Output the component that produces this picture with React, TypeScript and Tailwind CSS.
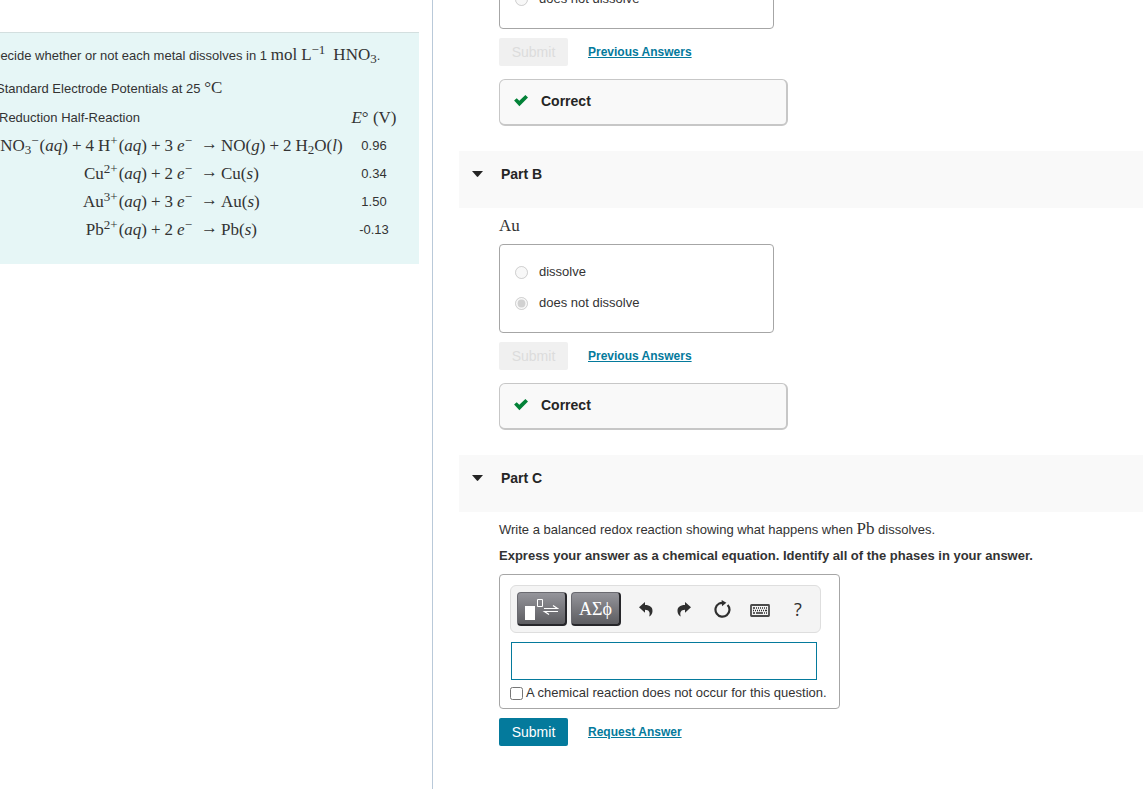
import type { ReactNode } from "react";

const SERIF = "font-['Liberation_Serif',serif] text-[17px]";

function Chem({ children }: { children: ReactNode }) {
  return <span className={`${SERIF} whitespace-nowrap leading-5`}>{children}</span>;
}

function Sup({ children }: { children: ReactNode }) {
  return <sup className="text-[13px]">{children}</sup>;
}

function Sub({ children }: { children: ReactNode }) {
  return <sub className="text-[13px]">{children}</sub>;
}

function Plus() {
  return <span className="mx-1">+</span>;
}

function Electrons({ count }: { count: number }) {
  return (
    <>
      {count}
      <i className="ml-1">e</i>
      <Sup>−</Sup>
    </>
  );
}

function Ion({ symbol, charge }: { symbol: string; charge: string }) {
  return (
    <>
      {symbol}
      <Sup>{charge}</Sup>
      <span className="ml-px">(</span>
      <i>aq</i>)
    </>
  );
}

type Reaction = { id: string; left: ReactNode; right: ReactNode; potential: string };

const metal = (symbol: string, charge: string, count: number, potential: string): Reaction => ({
  id: symbol,
  left: (
    <>
      <Ion symbol={symbol} charge={charge} />
      <Plus />
      <Electrons count={count} />
    </>
  ),
  right: (
    <>
      {symbol}(<i>s</i>)
    </>
  ),
  potential,
});

const reactions: Reaction[] = [
  {
    id: "NO3",
    left: (
      <>
        NO<Sub>3</Sub>
        <Sup>−</Sup>
        <span className="ml-px">(</span>
        <i>aq</i>)<Plus />4<span className="ml-1">H</span>
        <Sup>+</Sup>
        <span className="ml-px">(</span>
        <i>aq</i>)<Plus />
        <Electrons count={3} />
      </>
    ),
    right: (
      <>
        NO(<i>g</i>)<Plus />2<span className="ml-1">H</span>
        <Sub>2</Sub>O(<i>l</i>)
      </>
    ),
    potential: "0.96",
  },
  metal("Cu", "2+", 2, "0.34"),
  metal("Au", "3+", 3, "1.50"),
  metal("Pb", "2+", 2, "-0.13"),
];

function Introduction() {
  return (
    <aside className="w-[433px] shrink-0 overflow-hidden border-r border-[#b9c9d9] pt-8">
      <div className="mr-[13px] h-[232px] border-t border-[#d3dfdf] bg-[#e6f6f6] pt-3">
        <p className="-ml-[9px] whitespace-nowrap leading-5">
          Decide whether or not each metal dissolves in 1{" "}
          <Chem>
            mol<span className="ml-1">L</span>
            <Sup>−1</Sup>
            <span className="ml-2">HNO</span>
            <Sub>3</Sub>
          </Chem>
          .
        </p>
        <p className="-ml-1 mt-3 whitespace-nowrap leading-5">
          Standard Electrode Potentials at 25 <Chem>°C</Chem>
        </p>
        <table className="-ml-1 mt-[5px] w-[402px] table-fixed border-collapse">
          <colgroup>
            <col className="w-[196px]" />
            <col className="w-[29px]" />
            <col className="w-[129px]" />
            <col className="w-12" />
          </colgroup>
          <thead>
            <tr className="h-7">
              <th colSpan={3} className="p-0 pl-[3px] text-left font-normal">
                Reduction Half-Reaction
              </th>
              <th className="p-0 text-center font-normal">
                <Chem>
                  <i>E</i>° (V)
                </Chem>
              </th>
            </tr>
          </thead>
          <tbody>
            {reactions.map((r) => (
              <tr key={r.id} className="h-7">
                <td className="p-0">
                  <div className="flex justify-end">
                    <Chem>{r.left}</Chem>
                  </div>
                </td>
                <td className="p-0 pb-1 pr-[3px] text-right">
                  <Chem>→</Chem>
                </td>
                <td className="p-0">
                  <Chem>{r.right}</Chem>
                </td>
                <td className="p-0 text-center">{r.potential}</td>
              </tr>
            ))}
          </tbody>
        </table>
      </div>
    </aside>
  );
}

function Choices({ name, selected }: { name: string; selected: string }) {
  return (
    <fieldset
      disabled
      className="flex h-[89px] w-[275px] flex-col gap-[11px] rounded-[4px] border border-[#a6a6a6] pl-[15px] pt-[17px]"
    >
      {["dissolve", "does not dissolve"].map((option) => (
        <label key={option} className="flex h-5 items-center gap-[11px]">
          <input type="radio" name={name} defaultChecked={option === selected} className="m-0 size-[13px]" />
          {option}
        </label>
      ))}
    </fieldset>
  );
}

function Actions({ link, disabled = false }: { link: string; disabled?: boolean }) {
  return (
    <div className="mt-[9px] flex h-7 items-center gap-5">
      <button
        type="button"
        disabled={disabled}
        className="h-7 w-[69px] rounded-[2px] bg-[#047a9c] text-sm text-white disabled:bg-[#f0f0f0] disabled:text-[#dcdcdc]"
      >
        Submit
      </button>
      <a href="#answers" className="text-xs font-bold text-[#047a9c] underline underline-offset-1">
        {link}
      </a>
    </div>
  );
}

function CorrectBanner() {
  return (
    <div className="mt-[13px] flex h-[47px] w-[289px] items-start rounded-md border border-b-2 border-r-2 border-[#c7c7c7] bg-[#f9f9f9] pl-3.5 pt-[11px]">
      <svg viewBox="0 0 14 12" className="mt-1 h-3 w-3.5" aria-hidden="true">
        <path d="M0.1 5.6 2.7 3.3 5.3 5.7 11.4 0 14 2.4 5.4 11.2Z" fill="#038238" />
      </svg>
      <strong className="ml-[13px] text-sm leading-5 text-[#252525]">Correct</strong>
    </div>
  );
}

function PartHeader({ title }: { title: string }) {
  return (
    <header className="mt-[25px] flex h-[57px] items-start bg-[#f9f9f9] pl-[13px] pt-[13px]">
      <button type="button" className="flex items-center gap-[18px] text-sm font-bold leading-5 text-[#252525]">
        <svg viewBox="0 0 11 6" className="h-1.5 w-[11px]" aria-hidden="true">
          <path d="M0 0H11L6.2 5.6Q5.5 6.2 4.8 5.6Z" fill="#252525" />
        </svg>
        {title}
      </button>
    </header>
  );
}

const TOOL = "flex h-[34px] w-[38px] items-center justify-center";
const PALETTE =
  "flex h-[34px] w-[50px] items-center justify-center rounded-[4px] border border-b-2 border-r-2 border-[#26262a] border-l-[#6a6a70] border-t-[#6a6a70] bg-linear-to-b from-[#95959b] to-[#5d5d61] text-white";

function Toolbar() {
  return (
    <div className="flex h-12 w-[311px] items-center rounded-md border border-[#dedede] bg-[#f4f4f4] pl-1.5">
      <button type="button" aria-label="Templates" className={PALETTE}>
        <svg viewBox="0 0 34 22" className="h-[22px] w-[34px]" aria-hidden="true">
          <path d="M0 8H10V22H0Z" fill="#fff" />
          <path d="M12.5 1.5H17.5V8.5H12.5Z" fill="none" stroke="#fff" />
          <path d="M19 10.5H32.5L28 7.5M33 13.5H19.5L24 16.5" fill="none" stroke="#fff" strokeWidth="1.2" />
        </svg>
      </button>
      <button
        type="button"
        aria-label="Symbols"
        className={`${PALETTE} ml-1 mr-1.5 font-['Liberation_Serif',serif] text-lg`}
      >
        ΑΣϕ
      </button>
      <button type="button" aria-label="Undo" className={TOOL}>
        <svg viewBox="0 0 14 15" className="h-[15px] w-3.5" aria-hidden="true">
          <path d="M0 5.2 6 0V3.1C11 3.1 13.7 5.5 13.5 9.2 13.4 11.7 12 13.6 10.2 14.6 11.5 10.5 10.1 7.9 6 7.8V10.7Z" fill="#2f2f2f" />
        </svg>
      </button>
      <button type="button" aria-label="Redo" className={TOOL}>
        <svg viewBox="0 0 14 15" className="h-[15px] w-3.5" aria-hidden="true">
          <path d="M14 5.2 8 0V3.1C3 3.1 0.3 5.5 0.5 9.2 0.6 11.7 2 13.6 3.8 14.6 2.5 10.5 3.9 7.9 8 7.8V10.7Z" fill="#2f2f2f" />
        </svg>
      </button>
      <button type="button" aria-label="Reset" className={TOOL}>
        <svg viewBox="0 0 17 18" className="h-[18px] w-[17px]" aria-hidden="true">
          <path d="M13.6 4.9A7 7 0 1 1 5 3.6Q6.4 2.8 8.5 2.8" fill="none" stroke="#2f2f2f" strokeWidth="2.2" />
          <path d="M7.6 0 12.4 2.8 8 6.2Z" fill="#2f2f2f" />
        </svg>
      </button>
      <button type="button" aria-label="Keyboard shortcuts" className={`${TOOL} pt-[3px]`}>
        <svg viewBox="0 0 20 13" className="h-[13px] w-5" aria-hidden="true">
          <path d="M1.5 1H18.5Q19 1 19 1.5V11.5Q19 12 18.5 12H1.5Q1 12 1 11.5V1.5Q1 1 1.5 1Z" fill="none" stroke="#4a4a4a" strokeWidth="1.8" />
          <path
            d="M3 4H5M6 4H7M8 4H9M10 4H11M12 4H13M14 4H15M16 4H17M3 6.5H4M5 6.5H6M7 6.5H8M9 6.5H10M11 6.5H12M13 6.5H14M15 6.5H17M3 9H5M6 9H13M14 9H15M16 9H17"
            fill="none"
            stroke="#2f2f2f"
            strokeWidth="1.4"
          />
        </svg>
      </button>
      <button
        type="button"
        aria-label="Help"
        className={`${TOOL} font-['Open_Sans',sans-serif] text-lg font-medium text-[#2f2f2f]`}
      >
        ?
      </button>
    </div>
  );
}

function AnswerEditor() {
  return (
    <div className="h-[135px] w-[341px] rounded-[4px] border border-[#a6a6a6] pl-2.5 pt-2.5">
      <Toolbar />
      <input
        type="text"
        aria-label="Chemical equation"
        className="ml-px mt-[9px] block h-[38px] w-[306px] border border-[#047a9c] bg-white px-2 outline-none"
      />
      <label className="mt-[3px] flex h-5 items-center gap-[3px] whitespace-nowrap">
        <input type="checkbox" className="m-0 size-[13px]" />
        A chemical reaction does not occur for this question.
      </label>
    </div>
  );
}

export default function App() {
  return (
    <div className="flex h-screen overflow-hidden bg-white font-['Liberation_Sans',Arial,sans-serif] text-[13px] text-[#333]">
      <Introduction />
      <main className="min-w-0 flex-1 overflow-hidden pl-[26px]">
        <section className="-mt-[60px] pl-10">
          <Choices name="part-a" selected="dissolve" />
          <Actions link="Previous Answers" disabled />
          <CorrectBanner />
        </section>
        <section>
          <PartHeader title="Part B" />
          <div className="pl-10">
            <p className="flex h-9 items-center">
              <Chem>Au</Chem>
            </p>
            <Choices name="part-b" selected="does not dissolve" />
            <Actions link="Previous Answers" disabled />
            <CorrectBanner />
          </div>
        </section>
        <section>
          <PartHeader title="Part C" />
          <div className="pl-10 pt-[7px]">
            <p className="leading-5">
              Write a balanced redox reaction showing what happens when <Chem>Pb</Chem> dissolves.
            </p>
            <p className="mb-2 mt-1.5 font-bold leading-5">
              Express your answer as a chemical equation. Identify all of the phases in your answer.
            </p>
            <AnswerEditor />
            <Actions link="Request Answer" />
          </div>
        </section>
      </main>
    </div>
  );
}
